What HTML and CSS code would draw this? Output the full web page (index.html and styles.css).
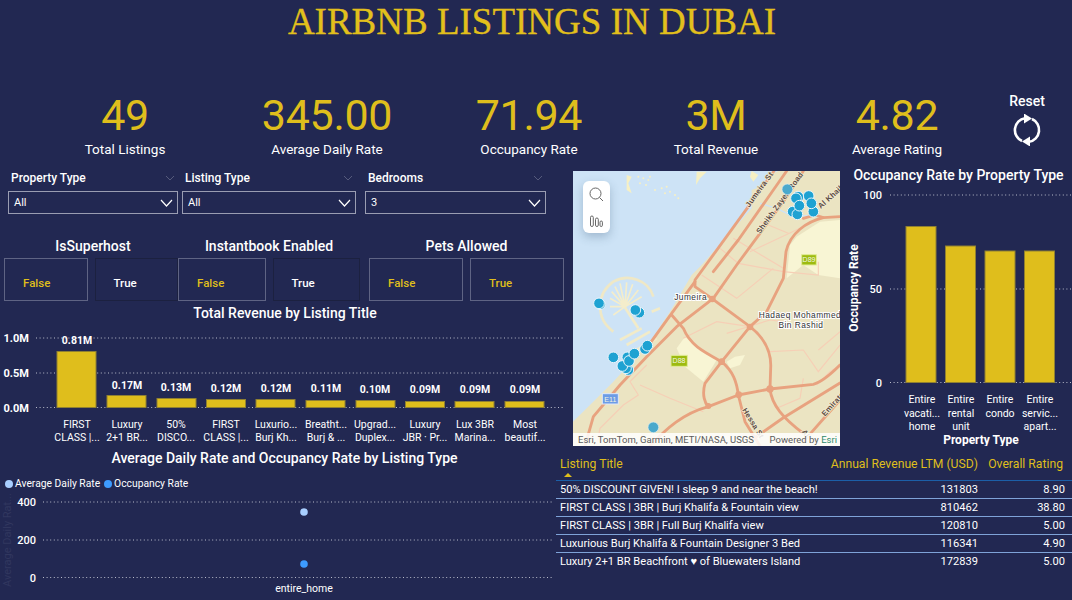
FILE: index.html
```html
<!DOCTYPE html>
<html lang="en">
<head>
<meta charset="utf-8">
<title>Airbnb Listings in Dubai</title>
<link rel="stylesheet" href="styles.css">
</head>
<body>
<div class="page">
  <h1 class="page-title">AIRBNB LISTINGS IN DUBAI</h1>

  <section class="kpis">
    <div class="kpi"><div class="kpi-value">49</div><div class="kpi-label">Total Listings</div></div>
    <div class="kpi"><div class="kpi-value">345.00</div><div class="kpi-label">Average Daily Rate</div></div>
    <div class="kpi"><div class="kpi-value">71.94</div><div class="kpi-label">Occupancy Rate</div></div>
    <div class="kpi"><div class="kpi-value">3M</div><div class="kpi-label">Total Revenue</div></div>
    <div class="kpi"><div class="kpi-value">4.82</div><div class="kpi-label">Average Rating</div></div>
    <div class="reset">
      <div class="reset-label">Reset</div>
      <svg class="reset-icon" viewBox="-16 -16 32 32" width="32" height="32">
        <path class="reset-arc" d="M-5,11 A12,12 0 0 1 -2,-11.8"/>
        <path class="reset-arc" d="M5,-11 A12,12 0 0 1 2,11.8"/>
        <path class="reset-head" d="M-3,-16.5 L5,-11.5 L-3,-6.5Z"/>
        <path class="reset-head" d="M3,16.5 L-5,11.5 L3,6.5Z"/>
      </svg>
    </div>
  </section>

  <section class="row-top">
    <div class="left-col">
      <div class="filters">
        <div class="filter filter-a">
          <div class="filter-title"><span>Property Type</span><svg class="chev-faint" viewBox="0 0 10 6" width="10" height="6"><path d="M1,1 L5,5 L9,1"/></svg></div>
          <div class="dropdown"><span>All</span><svg class="chev" viewBox="0 0 13 8" width="13" height="8"><path d="M1,1 L6.5,7 L12,1"/></svg></div>
        </div>
        <div class="filter filter-b">
          <div class="filter-title"><span>Listing Type</span><svg class="chev-faint" viewBox="0 0 10 6" width="10" height="6"><path d="M1,1 L5,5 L9,1"/></svg></div>
          <div class="dropdown"><span>All</span><svg class="chev" viewBox="0 0 13 8" width="13" height="8"><path d="M1,1 L6.5,7 L12,1"/></svg></div>
        </div>
        <div class="filter filter-c">
          <div class="filter-title"><span>Bedrooms</span><svg class="chev-faint" viewBox="0 0 10 6" width="10" height="6"><path d="M1,1 L5,5 L9,1"/></svg></div>
          <div class="dropdown"><span>3</span><svg class="chev" viewBox="0 0 13 8" width="13" height="8"><path d="M1,1 L6.5,7 L12,1"/></svg></div>
        </div>
      </div>

      <div class="toggles">
        <div class="toggle-group group-a">
          <div class="toggle-title">IsSuperhost</div>
          <div class="toggle-pair">
            <div class="toggle on">False</div>
            <div class="toggle off">True</div>
          </div>
        </div>
        <div class="toggle-group group-b">
          <div class="toggle-title">Instantbook Enabled</div>
          <div class="toggle-pair">
            <div class="toggle on">False</div>
            <div class="toggle off">True</div>
          </div>
        </div>
        <div class="toggle-group group-c">
          <div class="toggle-title">Pets Allowed</div>
          <div class="toggle-pair">
            <div class="toggle on">False</div>
            <div class="toggle on">True</div>
          </div>
        </div>
      </div>

      <h2 class="chart-title revenue-title">Total Revenue by Listing Title</h2>
      <svg class="chart revenue" viewBox="0 321 573 125" width="573" height="125">
        <g class="grid">
          <line x1="36" x2="564" y1="338" y2="338"/>
          <line x1="36" x2="564" y1="373" y2="373"/>
          <line x1="36" x2="564" y1="407.5" y2="407.5"/>
        </g>
        <g class="axis-strong">
          <text x="29" y="342">1.0M</text>
          <text x="29" y="377">0.5M</text>
          <text x="29" y="411.5">0.0M</text>
        </g>
        <g class="bars">
          <rect x="57" y="351.5" width="39" height="56"/>
          <rect x="107" y="395.5" width="39" height="12"/>
          <rect x="157" y="398.5" width="39" height="9"/>
          <rect x="206.5" y="399.5" width="39" height="8"/>
          <rect x="256" y="399.5" width="39" height="8"/>
          <rect x="306" y="400.5" width="39" height="7"/>
          <rect x="356" y="400.5" width="39" height="7"/>
          <rect x="405.5" y="401.5" width="39" height="6"/>
          <rect x="455" y="401.5" width="39" height="6"/>
          <rect x="505" y="401.5" width="39" height="6"/>
        </g>
        <g class="values">
          <text x="77" y="344">0.81M</text>
          <text x="127" y="389">0.17M</text>
          <text x="176" y="391">0.13M</text>
          <text x="226" y="391.5">0.12M</text>
          <text x="276" y="391.5">0.12M</text>
          <text x="326" y="392">0.11M</text>
          <text x="375" y="393">0.10M</text>
          <text x="425" y="393">0.09M</text>
          <text x="475" y="393">0.09M</text>
          <text x="525" y="393">0.09M</text>
        </g>
        <g class="cats">
          <text x="77" y="427.5">FIRST</text><text x="77" y="441">CLASS |...</text>
          <text x="127" y="427.5">Luxury</text><text x="127" y="441">2+1 BR...</text>
          <text x="176" y="427.5">50%</text><text x="176" y="441">DISCO...</text>
          <text x="226" y="427.5">FIRST</text><text x="226" y="441">CLASS |...</text>
          <text x="276" y="427.5">Luxurio...</text><text x="276" y="441">Burj Kh...</text>
          <text x="326" y="427.5">Breatht...</text><text x="326" y="441">Burj &amp; ...</text>
          <text x="375" y="427.5">Upgrad...</text><text x="375" y="441">Duplex...</text>
          <text x="425" y="427.5">Luxury</text><text x="425" y="441">JBR · Pr...</text>
          <text x="475" y="427.5">Lux 3BR</text><text x="475" y="441">Marina...</text>
          <text x="525" y="427.5">Most</text><text x="525" y="441">beautif...</text>
        </g>
      </svg>
    </div>

    <div class="map">
      <svg class="map-art" viewBox="9 18 801 825" width="267" height="275">
        <rect class="land" x="9" y="18" width="801" height="825"/>
        <path class="water" d="M9,18 L625,18 L600,30 L585,60 L545,75 L545,130 L470,215 L395,300 L365,330 L300,440 L240,530 L130,650 L60,720 L9,770Z"/>
        <path class="water-thin" d="M570,115 L620,130 L670,155 L740,150"/>
        <g class="pale">
          <path d="M680,215 L750,170 L810,165 L810,340 L745,330 L700,300 L650,340 L660,240Z"/>
          <path d="M345,515 L440,585 L400,650 L345,605 L320,550Z"/>
          <path d="M470,590 L495,575 L525,570 L510,600 L480,610Z"/>
        </g>
        <g class="islets">
          <path d="M170,30 L185,35 L175,55 L185,85 L170,75Z"/>
          <path d="M380,20 L410,20 L390,40 L378,60 Z"/>
          <path d="M545,18 L565,30 L550,50 L540,35Z"/>
          <circle cx="205" cy="35" r="3"/><circle cx="220" cy="40" r="3"/><circle cx="235" cy="45" r="3"/><circle cx="210" cy="55" r="3"/><circle cx="228" cy="60" r="3"/><circle cx="240" cy="35" r="3"/>
          <circle cx="275" cy="70" r="3"/><circle cx="290" cy="65" r="3"/><circle cx="300" cy="80" r="3"/><circle cx="315" cy="90" r="3"/><circle cx="285" cy="85" r="3"/><circle cx="325" cy="100" r="3"/><circle cx="255" cy="75" r="3"/>
        </g>
        <g class="palm">
          <path class="palm-ring" d="M130,500 C75,460 80,385 130,350 C175,325 235,345 250,395"/>
          <path class="palm-trunk" d="M160,420 L205,490"/>
          <path class="palm-frond" d="M165,425 L120,400 M165,425 L125,380 M165,425 L135,365 M165,425 L150,355 M165,425 L170,352 M165,425 L188,358 M165,425 L205,375 M165,425 L215,395 M165,425 L120,425 M165,425 L130,450"/>
          <path class="palm-trunk" d="M150,525 L215,490 M170,540 L240,500 M200,555 L260,520 M245,440 L270,430"/>
        </g>
        <g class="road-thin">
          <path d="M450,250 L505,295 L640,320 L745,330 L745,290"/>
          <path d="M490,220 L640,310"/>
          <path d="M540,260 L690,190"/>
          <path d="M395,330 L500,400 L610,310"/>
          <path d="M570,170 L655,205"/>
          <path d="M340,520 L440,470 L540,485"/>
          <path d="M230,600 L180,650 L205,690 L160,720 L90,790 L80,843"/>
          <path d="M400,740 L300,700 L210,660"/>
          <path d="M470,505 L600,465 L640,470"/>
          <path d="M600,560 L700,555 L745,620 L810,540"/>
          <path d="M740,660 L780,620 L810,600"/>
          <path d="M620,730 L690,700 L700,640"/>
          <path d="M810,500 L745,555"/>
        </g>
        <g class="road">
          <path d="M700,18 L640,110 L570,205 L500,300 L430,400 L320,485 L230,575 L150,660 L70,755 L45,843"/>
          <path d="M612,18 L535,125 L375,345 L375,365 L425,400"/>
          <path d="M650,18 L610,75 L505,225 L430,320"/>
          <path d="M375,350 L305,445 L240,535"/>
          <path d="M425,400 L540,485 C585,520 605,560 602,610 L600,672 C605,720 640,760 700,805"/>
          <path d="M810,155 L760,158 C710,170 660,205 648,260 L640,340 L590,440 L540,485 L455,590 L405,655 C395,690 405,715 415,725"/>
          <path d="M305,450 L340,490 C360,540 400,560 455,590 C490,620 500,650 505,690 L525,770 L570,843"/>
          <path d="M240,843 C290,790 340,745 415,725 L505,690 L600,672 L730,658 C760,650 790,620 810,600"/>
          <path d="M810,654 L639,759 L545,825"/>
          <path d="M810,705 L700,830"/>
          <path d="M760,158 L735,150 L700,160"/>
        </g>
        <g class="junctions">
          <circle cx="427" cy="402" r="10"/><circle cx="540" cy="486" r="10"/><circle cx="455" cy="590" r="10"/>
          <circle cx="600" cy="672" r="11"/><circle cx="506" cy="689" r="10"/><circle cx="415" cy="723" r="9"/>
        </g>
        <g class="shield-green"><rect x="695" y="269" width="44" height="31"/><rect x="303" y="571" width="49" height="33"/></g>
        <rect class="shield-blue" x="97" y="686" width="48" height="31"/>
        <g class="shield-text">
          <text x="717" y="292">D89</text><text x="327" y="595">D88</text><text x="121" y="710">E11</text>
        </g>
        <g class="map-label">
          <text x="362" y="405">Jumeira</text>
          <text x="690" y="460">Hadaeq Mohammed</text>
          <text x="693" y="490">Bin Rashid</text>
        </g>
        <g class="road-label">
          <text transform="translate(538,128) rotate(-54)">Jumeira St</text>
          <text transform="translate(570,208) rotate(-54)">Sheikh Zayed Road</text>
          <text transform="translate(752,132) rotate(-42)">Al Khail Rd</text>
          <text transform="translate(516,735) rotate(58)">Hessa St</text>
          <text transform="translate(694,800) rotate(55)">Al</text>
          <text transform="translate(765,755) rotate(-48)">Emirates</text>
        </g>
        <g class="pins-pale">
          <circle cx="652" cy="73" r="16"/><circle cx="250" cy="787" r="16"/>
        </g>
        <g class="pins">
          <circle cx="716" cy="93" r="16"/>
          <circle cx="668" cy="140" r="16"/><circle cx="682" cy="148" r="16"/>
          <circle cx="684" cy="96" r="17"/><circle cx="678" cy="100" r="16"/>
          <circle cx="730" cy="140" r="16"/><circle cx="724" cy="115" r="16"/><circle cx="688" cy="122" r="16"/>
          <circle cx="90" cy="418" r="16"/><circle cx="87" cy="415" r="16"/>
          <circle cx="208" cy="443" r="16"/><circle cx="196" cy="435" r="16"/>
          <circle cx="130" cy="577" r="16"/>
          <circle cx="225" cy="552" r="16"/><circle cx="232" cy="542" r="16"/>
          <circle cx="172" cy="577" r="16"/><circle cx="175" cy="615" r="16"/><circle cx="168" cy="610" r="16"/>
          <circle cx="157" cy="603" r="16"/><circle cx="177" cy="588" r="16"/><circle cx="193" cy="566" r="16"/>
        </g>
      </svg>
      <div class="map-tools">
        <svg viewBox="0 0 27 52" width="27" height="52">
          <circle class="tool" cx="12.5" cy="12.5" r="5.5"/>
          <path class="tool" d="M16.5,16.5 L20,20"/>
          <rect class="tool" x="7.5" y="35" width="2.8" height="10.5" rx="1.4"/>
          <rect class="tool" x="12.5" y="37" width="2.8" height="8.5" rx="1.4"/>
          <rect class="tool" x="17" y="40" width="2.4" height="5.5" rx="1.2"/>
        </svg>
      </div>
      <div class="map-credit"><span>Esri, TomTom, Garmin, METI/NASA, USGS</span><span>Powered by <span class="esri">Esri</span></span></div>
    </div>

    <div class="occ">
      <h2 class="chart-title occ-title">Occupancy Rate by Property Type</h2>
      <svg class="chart" viewBox="845 185 227 261" width="227" height="261">
        <g class="grid">
          <line x1="890" x2="1072" y1="195" y2="195"/>
          <line x1="890" x2="1072" y1="289" y2="289"/>
          <line x1="890" x2="1072" y1="382.5" y2="382.5"/>
        </g>
        <g class="axis-medium">
          <text x="882" y="199">100</text>
          <text x="882" y="293">50</text>
          <text x="882" y="386.5">0</text>
        </g>
        <text class="axis-title" transform="translate(858,288) rotate(-90)">Occupancy Rate</text>
        <g class="bars">
          <rect x="906" y="226.5" width="30" height="156"/>
          <rect x="945.5" y="246" width="30" height="136.5"/>
          <rect x="985" y="251" width="30" height="131.5"/>
          <rect x="1024.5" y="251" width="30" height="131.5"/>
        </g>
        <g class="cats">
          <text x="922" y="403">Entire</text><text x="922" y="417">vacati...</text><text x="922" y="430">home</text>
          <text x="961" y="403">Entire</text><text x="961" y="417">rental</text><text x="961" y="430">unit</text>
          <text x="1000" y="403">Entire</text><text x="1000" y="417">condo</text>
          <text x="1040" y="403">Entire</text><text x="1040" y="417">servic...</text><text x="1040" y="430">apart...</text>
        </g>
        <text class="axis-title" x="981" y="443.5">Property Type</text>
      </svg>
    </div>
  </section>

  <section class="row-bottom">
    <div class="scatter">
      <h2 class="chart-title scatter-title">Average Daily Rate and Occupancy Rate by Listing Type</h2>
      <div class="legend">
        <span class="legend-item"><i class="dot dot-light"></i>Average Daily Rate</span>
        <span class="legend-item"><i class="dot dot-blue"></i>Occupancy Rate</span>
      </div>
      <svg class="chart" viewBox="0 492 556 108" width="556" height="108">
        <g class="grid">
          <line x1="43" x2="553" y1="502" y2="502"/>
          <line x1="43" x2="553" y1="540" y2="540"/>
          <line x1="43" x2="553" y1="577.5" y2="577.5"/>
        </g>
        <text class="axis-dim" transform="translate(11,540) rotate(-90)">Average Daily Rat...</text>
        <g class="axis-medium">
          <text x="36" y="506">400</text>
          <text x="36" y="544">200</text>
          <text x="36" y="581.5">0</text>
        </g>
        <circle class="pt-light" cx="304" cy="512" r="3.8"/>
        <circle class="pt-blue" cx="304" cy="564" r="3.8"/>
        <text class="x-label" x="304" y="591.5">entire_home</text>
      </svg>
    </div>

    <div class="listings">
      <div class="tbl-head">
        <div class="th th-title">Listing Title<i class="sort"></i></div>
        <div class="th num">Annual Revenue LTM (USD)</div>
        <div class="th num">Overall Rating</div>
      </div>
      <div class="tbl-row"><div>50% DISCOUNT GIVEN! I sleep 9 and near the beach!</div><div class="num">131803</div><div class="num">8.90</div></div>
      <div class="tbl-row"><div>FIRST CLASS | 3BR | Burj Khalifa &amp; Fountain view</div><div class="num">810462</div><div class="num">38.80</div></div>
      <div class="tbl-row"><div>FIRST CLASS | 3BR | Full Burj Khalifa view</div><div class="num">120810</div><div class="num">5.00</div></div>
      <div class="tbl-row"><div>Luxurious Burj Khalifa &amp; Fountain Designer 3 Bed</div><div class="num">116341</div><div class="num">4.90</div></div>
      <div class="tbl-row"><div>Luxury 2+1 BR Beachfront ♥ of Bluewaters Island</div><div class="num">172839</div><div class="num">5.00</div></div>
    </div>
  </section>
</div>
</body>
</html>
```
FILE: styles.css
```css
* { box-sizing: border-box; }
html, body { margin: 0; padding: 0; }
body { background: #222852; overflow: hidden; }

.page {
  width: 1072px;
  height: 600px;
  background: #222852;
  color: #fff;
  font-family: Roboto, "Liberation Sans", sans-serif;
  overflow: hidden;
}

.page-title {
  margin: 0;
  height: 90px;
  padding: 2px 8px 0 0;
  text-align: center;
  font: 400 37px/40px "Liberation Serif", serif;
  color: #e2c01c;
  -webkit-text-stroke: 0.3px #e2c01c;
}

/* KPI strip */
.kpis {
  display: grid;
  grid-template-columns: 200px 204px 200px 174px 188px 72px;
  padding-left: 25px;
  height: 80px;
}
.kpi { text-align: center; }
.kpi-value {
  font-size: 43px;
  line-height: 50px;
  letter-spacing: -0.3px;
  color: #dfbe1c;
}
.kpi-label { font-size: 13.5px; line-height: 18px; }
.reset { display: flex; flex-direction: column; align-items: center; }
.reset-label { font-size: 14px; font-weight: 500; line-height: 22px; }
.reset-icon { margin-top: 2px; }
.reset-arc { fill: none; stroke: #fff; stroke-width: 2.6; }
.reset-head { fill: #fff; }

/* Top row */
.row-top { display: flex; height: 276px; }
.left-col { width: 573px; flex: none; }

.filters { display: flex; padding-left: 8px; height: 65px; }
.filter-a { width: 170px; margin-right: 4px; }
.filter-b { width: 174px; margin-right: 9px; }
.filter-c { width: 181px; }
.filter-title {
  display: flex;
  justify-content: space-between;
  align-items: center;
  height: 21px;
  padding: 0 3px 5px 3px;
  font-size: 12px;
  font-weight: 500;
}
.chev-faint { fill: none; stroke: #565b7c; stroke-width: 1; }
.dropdown {
  display: flex;
  justify-content: space-between;
  align-items: center;
  height: 23px;
  padding: 0 4px 0 5px;
  border: 1px solid #9a9db2;
  font-size: 11px;
}
.chev { fill: none; stroke: #fff; stroke-width: 1.2; }

.toggles { display: flex; padding-left: 4px; height: 70px; }
.group-a { width: 174px; }
.group-b { width: 182px; margin-right: 9px; }
.group-c { width: 195px; }
.toggle-title { text-align: center; font-size: 14px; font-weight: 500; line-height: 23px; }
.group-a .toggle-title { padding-left: 4px; }
.toggle-pair { display: flex; gap: 7px; }
.toggle {
  flex: 1;
  height: 43px;
  padding: 14px 0 0 18px;
  font-size: 11.5px;
  font-weight: 500;
  line-height: 20px;
}
.toggle.on { border: 1px solid #5f6484; color: #dfbe1c; }
.toggle.off { border: 1px solid #1c2140; color: #fff; }

.chart-title { margin: 0; font-weight: 500; font-size: 14px; text-align: center; }
.revenue-title { line-height: 16px; padding-right: 3px; height: 16px; }
.chart { display: block; overflow: hidden; }
.chart text { font-family: Roboto, "Liberation Sans", sans-serif; }

.grid line { stroke: #b9bccb; stroke-width: 1; stroke-dasharray: 1 2.6; }
.axis-strong text { fill: #fff; font-size: 11px; font-weight: 700; text-anchor: end; }
.axis-medium text { fill: #fff; font-size: 11px; font-weight: 500; text-anchor: end; }
.bars rect { fill: #dfbe1c; stroke: #8f8032; stroke-width: 1; }
.values text { fill: #fff; font-size: 10.5px; font-weight: 700; text-anchor: middle; }
.cats text { fill: #fff; font-size: 10.5px; text-anchor: middle; }
.axis-title { fill: #fff; font-size: 12px; font-weight: 700; text-anchor: middle; }
.axis-dim { fill: #31375f; font-size: 11px; text-anchor: middle; }
.x-label { fill: #fff; font-size: 10.5px; text-anchor: middle; }
.pt-light { fill: #a8ceff; }
.pt-blue { fill: #3d9bff; }

/* Map */
.map { position: relative; width: 267px; height: 275px; flex: none; margin-top: 1px; overflow: hidden; }
.map-art { display: block; }
.map-art text { font-family: "Liberation Sans", sans-serif; }
.land { fill: #ebe4c2; }
.water { fill: #cde3f6; }
.water-thin { fill: none; stroke: #cde3f6; stroke-width: 4; }
.pale path { fill: #f8f5d4; }
.islets path, .islets circle { fill: #f6f0c4; }
.palm-ring { fill: none; stroke: #efe8c6; stroke-width: 8; }
.palm-trunk { fill: none; stroke: #f2ebc8; stroke-width: 8; }
.palm-frond { fill: none; stroke: #f4edcb; stroke-width: 5; }
.road path { fill: none; stroke: #e8a27f; stroke-width: 8.5; stroke-linejoin: round; stroke-linecap: round; }
.road-thin path { fill: none; stroke: #f6cfb6; stroke-width: 3.5; }
.junctions circle { fill: #e8a27f; }
.shield-green rect { fill: #9dbb10; stroke: #e3ec9a; stroke-width: 3; }
.shield-blue { fill: #6d9ce6; stroke: #dfe9fa; stroke-width: 3; }
.shield-text text { fill: #f3f6e2; font-size: 21px; text-anchor: middle; }
.map-label text {
  fill: #333;
  font-size: 25px;
  letter-spacing: 1.4px;
  text-anchor: middle;
  paint-order: stroke;
  stroke: #fff;
  stroke-width: 6px;
}
.road-label text {
  fill: #5d4d45;
  font-size: 23px;
  font-weight: 700;
  letter-spacing: 0.6px;
  paint-order: stroke;
  stroke: #f4ecd2;
  stroke-width: 4px;
}
.pins circle { fill: #1ea2d2; stroke: #e9f5fb; stroke-width: 3; }
.pins-pale circle { fill: #4aa9cc; stroke: #d7ecf4; stroke-width: 2; }

.map-tools {
  position: absolute;
  left: 10px;
  top: 10px;
  width: 27px;
  height: 52px;
  background: #fff;
  border-radius: 6px;
  box-shadow: 0 4px 10px rgba(60, 90, 120, 0.3);
}
.map-tools svg { display: block; }
.tool { fill: none; stroke: #666; stroke-width: 1; }

.map-credit {
  position: absolute;
  left: 0;
  right: 0;
  bottom: 0;
  height: 13px;
  padding: 0 3px 0 5px;
  display: flex;
  justify-content: space-between;
  background: rgba(255, 255, 255, 0.85);
  color: #5a5a5a;
  font-size: 9.5px;
  line-height: 13px;
}
.esri { color: #2f8a6c; }

/* Occupancy chart */
.occ { width: 232px; flex: none; padding-left: 5px; }
.occ-title { line-height: 15px; height: 15px; margin-top: -2px; margin-bottom: 2px; white-space: nowrap; }

/* Bottom row */
.row-bottom { display: flex; height: 154px; }
.scatter { width: 556px; flex: none; }
.scatter-title { line-height: 24px; height: 24px; padding-left: 13px; }
.legend { display: flex; gap: 4px; height: 22px; padding: 6px 0 0 5px; font-size: 10.3px; line-height: 14px; }
.legend-item { display: flex; align-items: center; gap: 2px; }
.dot { width: 8px; height: 8px; border-radius: 50%; display: block; }
.dot-light { background: #a8ceff; }
.dot-blue { background: #3d9bff; }

.listings { width: 516px; flex: none; font-size: 11.1px; }
.tbl-head {
  display: grid;
  grid-template-columns: minmax(0, 1fr) 170px 85px;
  height: 35px;
  padding: 10px 9px 0 4px;
  border-bottom: 1px solid #1c5fa8;
  color: #dfbe1c;
}
.th { font-size: 12.2px; line-height: 16px; position: relative; white-space: nowrap; }
.sort {
  position: absolute;
  left: 4px;
  top: 17px;
  border-left: 4px solid transparent;
  border-right: 4px solid transparent;
  border-bottom: 4px solid #dfbe1c;
}
.num { text-align: right; }
.tbl-row {
  display: grid;
  grid-template-columns: minmax(0, 1fr) 100px 87px;
  height: 18px;
  padding: 0 7px 0 4px;
  line-height: 18px;
  border-bottom: 1px solid #7fa3d8;
  white-space: nowrap;
}
.tbl-row:last-child { border-bottom: 0; }
```
